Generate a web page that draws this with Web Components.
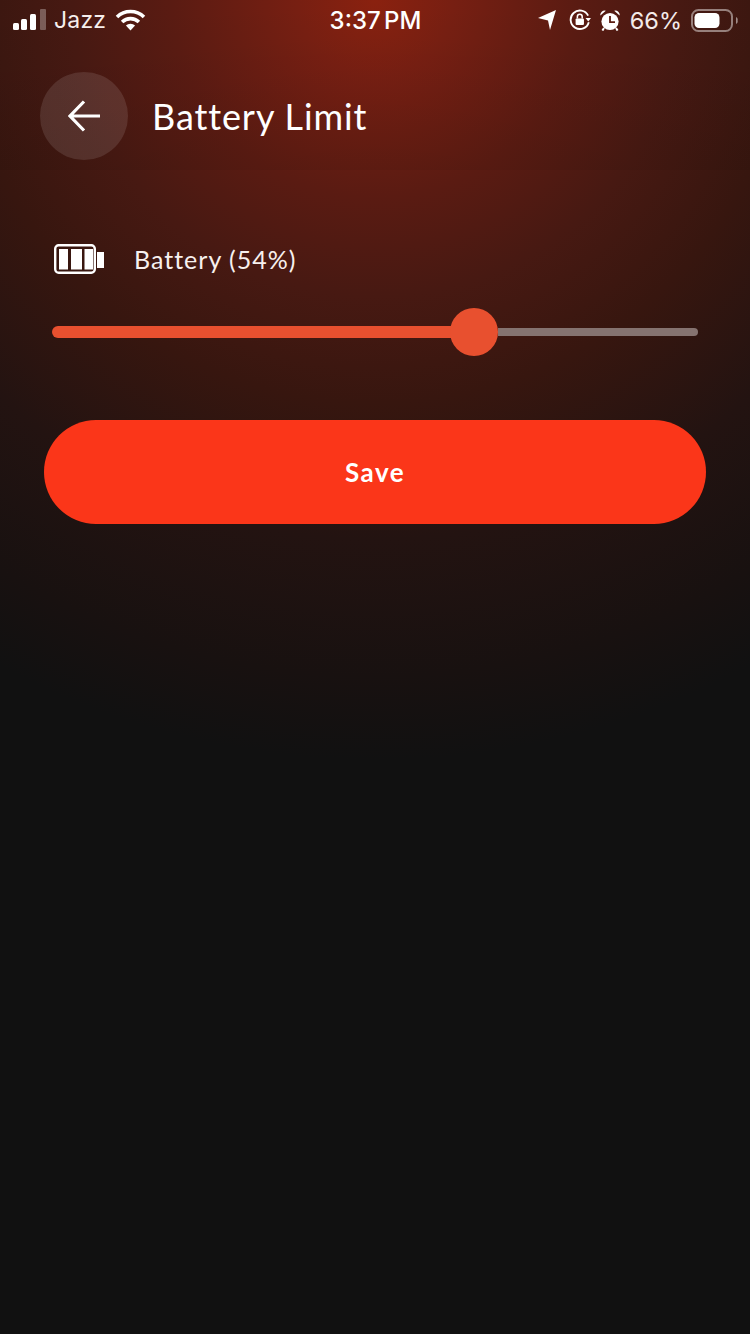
<!DOCTYPE html>
<html>
<head>
<meta charset="utf-8">
<title>Battery Limit</title>
<style>
  html, body { margin: 0; height: 100%; background: #111; }
  body { font-family: "Lato", "Liberation Sans", sans-serif; color: #fff; }
</style>
</head>
<body>
<limit-screen>
  <top-section>
    <status-bar></status-bar>
    <page-header>Battery Limit</page-header>
  </top-section>
  <battery-row>Battery (54%)</battery-row>
  <limit-slider value="422"></limit-slider>
  <save-button>Save</save-button>
</limit-screen>

<script>
class LimitScreen extends HTMLElement {
  constructor() {
    super();
    this.attachShadow({ mode: 'open' });
    this.shadowRoot.innerHTML = `
      <style>
        :host {
          display: block; width: 750px; height: 1334px; overflow: hidden;
          background:
            radial-gradient(ellipse 780px 760px at 375px 0px,
              #8a210f 0%, #771f12 10%, #5a1b12 26%, #471912 39%, #37160f 53%,
              #231311 71%, #181110 89%, #111111 100%);
        }
      </style>
      <slot></slot>
    `;
  }
}

// header area is a touch darker than the page, ends in a faint edge at y=170
class TopSection extends HTMLElement {
  constructor() {
    super();
    this.attachShadow({ mode: 'open' });
    this.shadowRoot.innerHTML = `
      <style>
        :host {
          display: block; height: 170px;
          background: linear-gradient(rgba(0,0,0,0), rgba(0,0,0,.05));
        }
      </style>
      <slot></slot>
    `;
  }
}

class StatusBar extends HTMLElement {
  constructor() {
    super();
    this.attachShadow({ mode: 'open' });
    this.shadowRoot.innerHTML = `
      <style>
        :host {
          display: flex; align-items: center; height: 40px; padding: 0 12px 0 13px;
          box-sizing: border-box; font-family: "Inter", "Liberation Sans", sans-serif;
          font-size: 24px; color: #fff;
        }
        .side { flex: 1; display: flex; align-items: center; min-width: 0; }
        .right { justify-content: flex-end; }
        .carrier { margin-left: 8px; margin-right: 9px; font-size: 23px; letter-spacing: .2px; color: #f6eeec; }
        .time { font-weight: 500; font-size: 24px; word-spacing: -3px; }
        .pct { margin: 0 9px 0 10px; font-size: 23.5px; color: #f4ebe9; }
        svg { display: block; }
      </style>
      <div class="side">
        <svg width="33" height="22" viewBox="0 0 33 22">
          <rect x="0" y="14" width="6" height="7" rx="1.5" fill="#fff"/>
          <rect x="8" y="10" width="6" height="11" rx="1.5" fill="#fff"/>
          <rect x="17" y="5" width="6" height="16" rx="1.5" fill="#fff"/>
          <rect x="27" y="0" width="6" height="21" rx="1" fill="#fff" opacity=".3"/>
        </svg>
        <span class="carrier">Jazz</span>
        <svg width="31" height="22" viewBox="0 0 30 22">
          <path d="M1.5 8A19.5 19.5 0 0 1 28.5 8" fill="none" stroke="#fff" stroke-width="3.6"/>
          <path d="M6.6 13A12.2 12.2 0 0 1 23.4 13" fill="none" stroke="#fff" stroke-width="3.6"/>
          <path d="M10.4 16.6A6.6 6.6 0 0 1 19.6 16.6L15 21.5Z" fill="#fff"/>
        </svg>
      </div>
      <span class="time">3:37 PM</span>
      <div class="side right">
        <svg width="18" height="20" viewBox="0 0 18 20"><path d="M18 0L12 20L10 10.5L0 8Z" fill="#fff"/></svg>
        <svg style="margin-left:13px" width="22" height="22" viewBox="0 0 20 20">
          <path d="M18 12A8.4 8.4 0 1 1 17.4 6" fill="none" stroke="#fff" stroke-width="1.7"/>
          <path d="M15 8.2H20L17.5 11.4Z" fill="#fff"/>
          <rect x="6" y="8.6" width="7.6" height="6" rx="1" fill="#fff"/>
          <path d="M7.6 8.6V7a2.2 2.2 0 0 1 4.4 0V8.6" fill="none" stroke="#fff" stroke-width="1.4"/>
        </svg>
        <svg style="margin-left:9px" width="20" height="21" viewBox="0 0 20 21">
          <circle cx="10" cy="11.5" r="8.6" fill="#fff"/>
          <path d="M.4 5.6A4.2 4.2 0 0 1 5.8 .8ZM19.6 5.6A4.2 4.2 0 0 0 14.2 .8Z" fill="#fff"/>
          <path d="M4 18L2.4 20.6M16 18L17.6 20.6" stroke="#fff" stroke-width="2"/>
          <path d="M10 6v6.2H15" fill="none" stroke="#5b1c12" stroke-width="1.8"/>
        </svg>
        <span class="pct">66%</span>
        <svg width="47" height="23" viewBox="0 0 47 23">
          <rect x="1" y="1" width="40" height="21" rx="6.5" fill="none" stroke="#fff" stroke-opacity=".45" stroke-width="2"/>
          <rect x="3.5" y="4" width="25" height="15" rx="4.5" fill="#fff"/>
          <path d="M45 8v7a3 3 0 0 0 1.6-3.5A3 3 0 0 0 45 8Z" fill="#fff" fill-opacity=".5"/>
        </svg>
      </div>
    `;
  }
}

class PageHeader extends HTMLElement {
  constructor() {
    super();
    this.attachShadow({ mode: 'open' });
    this.shadowRoot.innerHTML = `
      <style>
        :host {
          display: flex; align-items: center; gap: 24px;
          margin: 32px 0 0 40px; height: 88px;
        }
        .back {
          width: 88px; height: 88px; border-radius: 50%; flex: none;
          display: flex; align-items: center; justify-content: center;
          background: rgba(255,255,255,.11);
        }
        .title { font-size: 36px; letter-spacing: .9px; color: #fff; }
      </style>
      <div class="back">
        <svg width="32" height="32" viewBox="0 0 32 32">
          <path d="M32 16H2M16 1.5L2 16L16 30.5" fill="none" stroke="#fff" stroke-width="3.2"/>
        </svg>
      </div>
      <div class="title"><slot></slot></div>
    `;
  }
}

class BatteryRow extends HTMLElement {
  constructor() {
    super();
    this.attachShadow({ mode: 'open' });
    this.shadowRoot.innerHTML = `
      <style>
        :host {
          display: flex; align-items: center; gap: 30px;
          margin: 72px 0 0 54px; height: 34px;
          font-size: 25px; letter-spacing: 1px; color: #f7f0ee;
        }
      </style>
      <svg width="50" height="30" viewBox="0 0 50 30">
        <rect x="1.2" y="1.2" width="39.6" height="27.6" rx="3.5" fill="none" stroke="#fff" stroke-width="2.4"/>
        <rect x="5" y="5" width="9" height="20.5" fill="#fff"/>
        <rect x="17" y="5" width="11" height="20.5" fill="#fff"/>
        <rect x="30.5" y="5" width="8.5" height="20.5" fill="#fff"/>
        <rect x="43" y="8" width="7" height="16" fill="#fff"/>
      </svg>
      <slot></slot>
    `;
  }
}

class LimitSlider extends HTMLElement {
  constructor() {
    super();
    this.attachShadow({ mode: 'open' });
    const fill = this.getAttribute('value') || 400;
    this.shadowRoot.innerHTML = `
      <style>
        :host {
          display: flex; align-items: center;
          margin: 32px 52px 0; height: 48px;
        }
        .fill { width: ${fill}px; height: 12px; background: #e8502f; border-radius: 6px 0 0 6px; margin-right: -24px; flex: none; }
        .thumb { width: 48px; height: 48px; border-radius: 50%; background: #e8502f; flex: none; position: relative; }
        .rest { flex: 1; height: 8px; background: #857370; border-radius: 0 4px 4px 0; }
      </style>
      <div class="fill"></div>
      <div class="thumb"></div>
      <div class="rest"></div>
    `;
  }
}

class SaveButton extends HTMLElement {
  constructor() {
    super();
    this.attachShadow({ mode: 'open' });
    this.shadowRoot.innerHTML = `
      <style>
        :host {
          display: flex; align-items: center; justify-content: center;
          margin: 64px 44px 0; height: 104px; border-radius: 52px;
          background: #fb3619; color: #fff;
          font-size: 26px; font-weight: 700; letter-spacing: 1.5px;
        }
      </style>
      <slot></slot>
    `;
  }
}

customElements.define('limit-screen', LimitScreen);
customElements.define('top-section', TopSection);
customElements.define('status-bar', StatusBar);
customElements.define('page-header', PageHeader);
customElements.define('battery-row', BatteryRow);
customElements.define('limit-slider', LimitSlider);
customElements.define('save-button', SaveButton);
</script>
</body>
</html>
